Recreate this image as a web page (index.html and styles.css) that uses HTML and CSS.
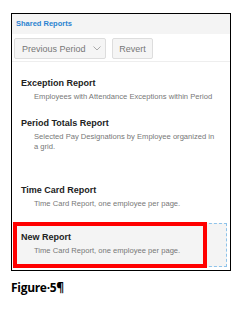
FILE: index.html
```html
<!DOCTYPE html>
<html lang="en">

<head>
    <meta charset="UTF-8">
    <meta name="viewport" content="width=device-width, initial-scale=1.0">

    <link rel="stylesheet" href="styles.css">
</head>

<body>
    <div class="frame">
        <div class="header">Shared Reports</div>
        <div class="toolbar">
            <button class="period">
                <span>Previous Period</span>
                <svg width="8" height="5" viewBox="0 0 8 5"><polyline points="0.5,0.5 4,4 7.5,0.5" fill="none" stroke="#aaa" stroke-width="1"/></svg>
            </button>
            <button class="revert">Revert</button>
        </div>
        <div class="reports">
            <div class="report">
                <p class="title">Exception Report</p>
                <p class="desc">Employees with Attendance Exceptions within Period</p>
            </div>
            <div class="report">
                <p class="title">Period Totals Report</p>
                <p class="desc">Selected Pay Designations by Employee organized in a&nbsp;grid.</p>
            </div>
            <div class="report spaced">
                <p class="title">Time Card Report</p>
                <p class="desc">Time Card Report, one employee per page.</p>
            </div>
            <div class="report dragged">
                <p class="title">New Report</p>
                <p class="desc">Time Card Report, one employee per page.</p>
                <div class="highlight"></div>
            </div>
        </div>
    </div>
    <p class="caption">Figure·5¶</p>
</body>

</html>
```
FILE: styles.css
```css
body {
    margin: 0;
    background: white;
    font-family: 'Liberation Sans', Arial, sans-serif;
}

.frame {
    margin: 13px 0 0 11px;
    width: 218px;
    border: 1px solid black;
    padding-bottom: 3px;
}

.header {
    height: 20px;
    line-height: 20px;
    padding-left: 4px;
    background: #f4f4f4;
    color: #2b83d0;
    font-size: 7.5px;
    font-weight: bold;
}

.toolbar {
    display: flex;
    gap: 6px;
    height: 28px;
    box-sizing: border-box;
    padding: 4px 0 0 2px;
    border-bottom: 1px solid #eeeeee;

    & button {
        height: 21px;
        box-sizing: border-box;
        display: flex;
        align-items: center;
        gap: 7px;

        background: #f5f5f5;
        border: 1px solid #dddddd;
        border-radius: 2px;
        color: #777777;
        font-family: 'Liberation Sans', Arial, sans-serif;
        font-size: 9px;
    }

    .period {
        width: 92px;
        padding: 0 0 0 7px;
    }

    .revert {
        width: 41px;
        justify-content: center;
        padding: 0;
    }
}

.reports {
    padding-top: 7px;
}

.report {
    margin: 0 3px 0 1px;
    padding: 7px 0 7px 8px;
    position: relative;

    p {
        margin: 0;
    }

    .title {
        font-size: 9px;
        line-height: 14px;
        font-weight: bold;
        color: #222222;
    }

    .desc {
        margin-top: 2px;
        padding-left: 13px;
        padding-right: 2px;
        font-size: 7.6px;
        line-height: 10px;
        color: #777777;
    }
}

.spaced {
    margin-top: 17px;
}

.dragged {
    margin-top: 7px;
    padding: 6px 0 10px 7px;
    border: 1px dashed #8ec3ea;
    background: #f4f4f4;
}

.highlight {
    position: absolute;
    left: -1px;
    top: -2px;
    width: 194px;
    height: 46px;
    box-sizing: border-box;
    border: 4px solid #ff0000;
}

.caption {
    margin: 8px 0 0 11px;
    font-family: 'Open Sans', sans-serif;
    font-weight: bold;
    font-size: 12px;
    letter-spacing: -0.3px;
}
```
